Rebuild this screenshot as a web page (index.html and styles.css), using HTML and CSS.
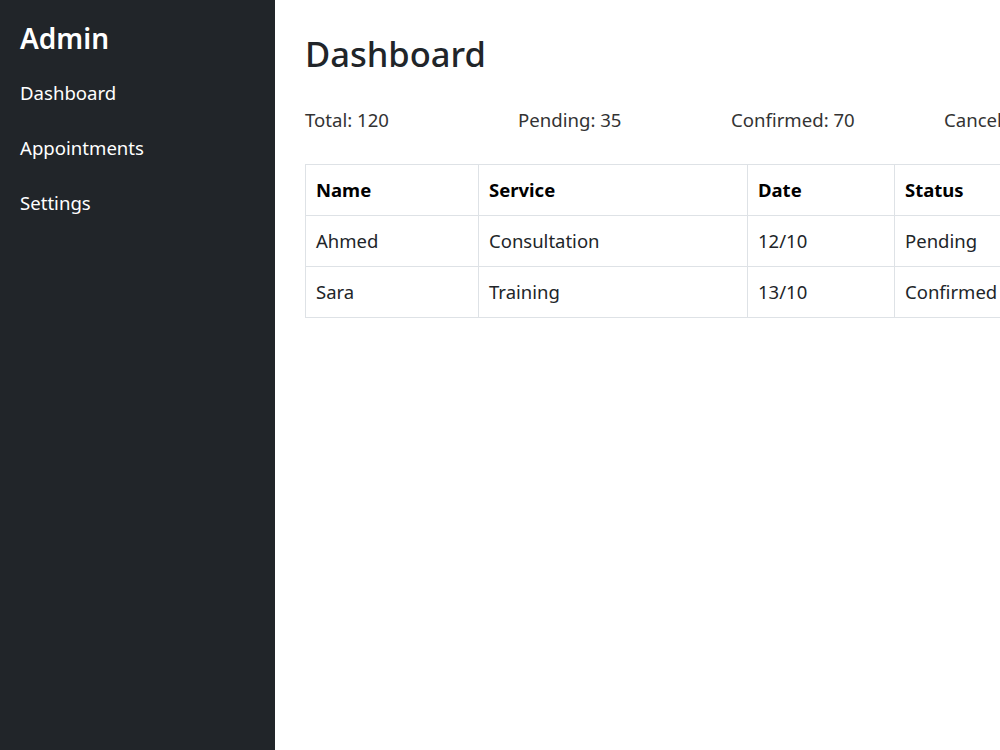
FILE: index.html
```html
<!DOCTYPE html>
<html lang="en">
<head>
<meta charset="utf-8">
<title>Admin Dashboard</title>
<link rel="stylesheet" href="styles.css">
</head>
<body>
<div class="layout">
  <aside class="sidebar">
    <h3 class="brand">Admin</h3>
    <nav class="nav">
      <a href="#" class="nav-link">Dashboard</a>
      <a href="#" class="nav-link">Appointments</a>
      <a href="#" class="nav-link">Settings</a>
    </nav>
  </aside>
  <main class="main">
    <h1 class="title">Dashboard</h1>
    <div class="stats">
      <div class="stat">Total: 120</div>
      <div class="stat">Pending: 35</div>
      <div class="stat">Confirmed: 70</div>
      <div class="stat">Cancelled: 15</div>
    </div>
    <table class="table">
      <thead>
        <tr><th class="c-name">Name</th><th class="c-service">Service</th><th class="c-date">Date</th><th class="c-status">Status</th></tr>
      </thead>
      <tbody>
        <tr><td>Ahmed</td><td>Consultation</td><td>12/10</td><td>Pending</td></tr>
        <tr><td>Sara</td><td>Training</td><td>13/10</td><td>Confirmed</td></tr>
      </tbody>
    </table>
  </main>
</div>
</body>
</html>
```
FILE: styles.css
```css
* { box-sizing: border-box; }
html, body { margin: 0; padding: 0; overflow: hidden; }
body {
  font-family: "Noto Sans", "Open Sans", sans-serif;
  color: #212529;
  background: #fff;
  width: 1000px;
  height: 750px;
}
.layout {
  display: flex;
  height: 750px;
  width: 1200px;
}
.sidebar {
  width: 275px;
  flex: 0 0 275px;
  background: #212529;
  color: #fff;
  padding: 20px 20px;
}
.brand {
  margin: 0 0 22px;
  font-size: 28px;
  font-weight: 600;
  line-height: 36px;
}
.nav { display: flex; flex-direction: column; gap: 25px; }
.nav-link {
  color: #fff;
  text-decoration: none;
  font-size: 18.6px;
  line-height: 30px;
}
.main {
  flex: 1;
  padding: 30px 30px;
}
.title {
  margin: 0 0 28px;
  font-size: 34.5px;
  font-weight: 500;
  line-height: 48px;
}
.stats {
  display: grid;
  grid-template-columns: repeat(4, 213px);
  font-size: 18.6px;
  line-height: 28px;
  color: #333;
  margin-bottom: 30px;
}
.table {
  border-collapse: collapse;
  font-size: 18.5px;
}
.table th, .table td {
  border: 1px solid #dee2e6;
  padding: 12px 10px;
  line-height: 26px;
  text-align: left;
}
.table th { font-weight: 700; color: #000; }
.c-name { width: 173px; }
.c-service { width: 269px; }
.c-date { width: 147px; }
.c-status { width: 200px; }
```
